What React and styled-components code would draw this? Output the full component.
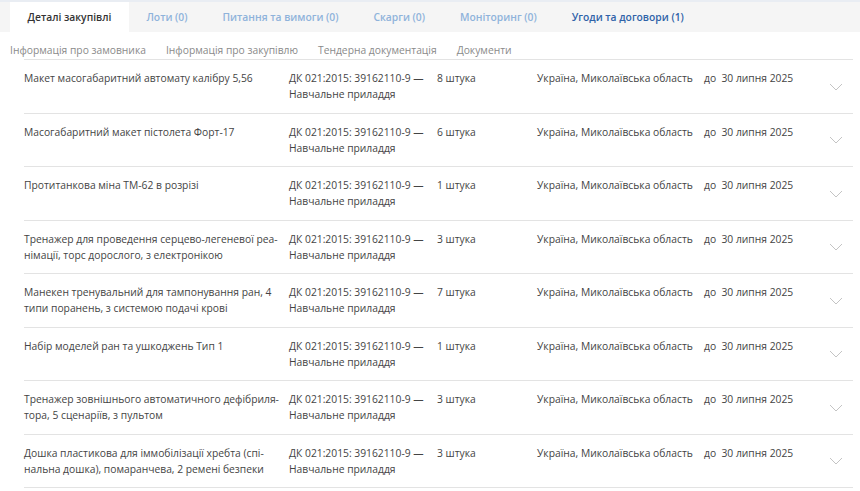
import React from "react";
import styled, { createGlobalStyle } from "styled-components";

const Global = createGlobalStyle`
  body {
    margin: 0;
    background: #fff;
    font-family: "Open Sans", "Noto Sans", Arial, sans-serif;
    color: #444;
  }
`;

const tabs = [
  { name: "Деталі закупівлі", kind: "active" },
  { name: "Лоти (0)", kind: "muted" },
  { name: "Питання та вимоги (0)", kind: "muted" },
  { name: "Скарги (0)", kind: "muted" },
  { name: "Моніторинг (0)", kind: "muted" },
  { name: "Угоди та договори (1)", kind: "link" },
];

const subnav = [
  "Інформація про замовника",
  "Інформація про закупівлю",
  "Тендерна документація",
  "Документи",
];

const items = [
  { name: "Макет масогабаритний автомату калібру 5,56", qty: "8 штука" },
  { name: "Масогабаритний макет пістолета Форт-17", qty: "6 штука" },
  { name: "Протитанкова міна ТМ-62 в розрізі", qty: "1 штука" },
  { name: "Тренажер для проведення серцево-легеневої реа\u00ADнімації, торс дорослого, з електронікою", qty: "3 штука" },
  { name: "Манекен тренувальний для тампонування ран, 4 типи поранень, з системою подачі крові", qty: "7 штука" },
  { name: "Набір моделей ран та ушкоджень Тип 1", qty: "1 штука" },
  { name: "Тренажер зовнішнього автоматичного дефібриля\u00ADтора, 5 сценаріїв, з пультом", qty: "3 штука" },
  { name: "Дошка пластикова для іммобілізації хребта (спі\u00ADнальна дошка), помаранчева, 2 ремені безпеки", qty: "3 штука" },
];

const tabColors = {
  active: "#333",
  muted: "#8fb3db",
  link: "#2f62a8",
};

function App() {
  return (
    <>
      <Global />
      <TabBar>
        {tabs.map((t) => (
          <Tab key={t.name} kind={t.kind}>{t.name}</Tab>
        ))}
      </TabBar>
      <SubNav>
        {subnav.map((s) => (
          <SubLink key={s}>{s}</SubLink>
        ))}
      </SubNav>
      <List>
        {items.map((it, i) => (
          <Row key={i}>
            <Name>{it.name}</Name>
            <Cell>ДК 021:2015: 39162110-9 — Навчальне приладдя</Cell>
            <Cell>{it.qty}</Cell>
            <Cell>Україна, Миколаївська область</Cell>
            <DateCell>до&nbsp;&nbsp;30 липня 2025</DateCell>
            <Chevron>
              <svg width="14" height="8" viewBox="0 0 14 8">
                <path d="M1 1 L7 7 L13 1" fill="none" stroke="#c4c4c4" strokeWidth="1" />
              </svg>
            </Chevron>
          </Row>
        ))}
      </List>
    </>
  );
}

const TabBar = styled.div`
  display: flex;
  height: 30px;
  padding-left: 10px;
  background: #f5f5f5;
  border-top: 2px solid #e9edf3;
`;

const Tab = styled.div`
  display: flex;
  align-items: center;
  padding: 0 17.5px;
  font-size: 10.3px;
  font-weight: 600;
  color: ${({ kind }) => tabColors[kind]};
  background: ${({ kind }) => (kind === "active" ? "#fff" : "transparent")};
`;

const SubNav = styled.div`
  display: flex;
  gap: 20px;
  padding: 10px 0 0 10px;
  height: 17px;
  font-size: 10.3px;
  line-height: 16px;
`;

const SubLink = styled.div`
  color: #8a8a8a;
`;

const List = styled.div`
  margin: 0 7px 0 24px;
  border-top: 1px solid #e3e3e3;
`;

const Row = styled.div`
  display: grid;
  grid-template-columns: 265px 148px 100px 167px 1fr 30px;
  align-items: start;
  padding: 10px 0 10.5px;
  border-bottom: 1px solid #e3e3e3;
  font-size: 10.3px;
  line-height: 16px;
  min-height: 32px;
`;

const Cell = styled.div`
  color: #444;
  padding-right: 4px;
`;

const Name = styled(Cell)`
  hyphens: manual;
`;

const DateCell = styled(Cell)`
  white-space: nowrap;
`;

const Chevron = styled.div`
  align-self: center;
  display: flex;
  padding: 1px 0 0 6px;
`;

export default App;
